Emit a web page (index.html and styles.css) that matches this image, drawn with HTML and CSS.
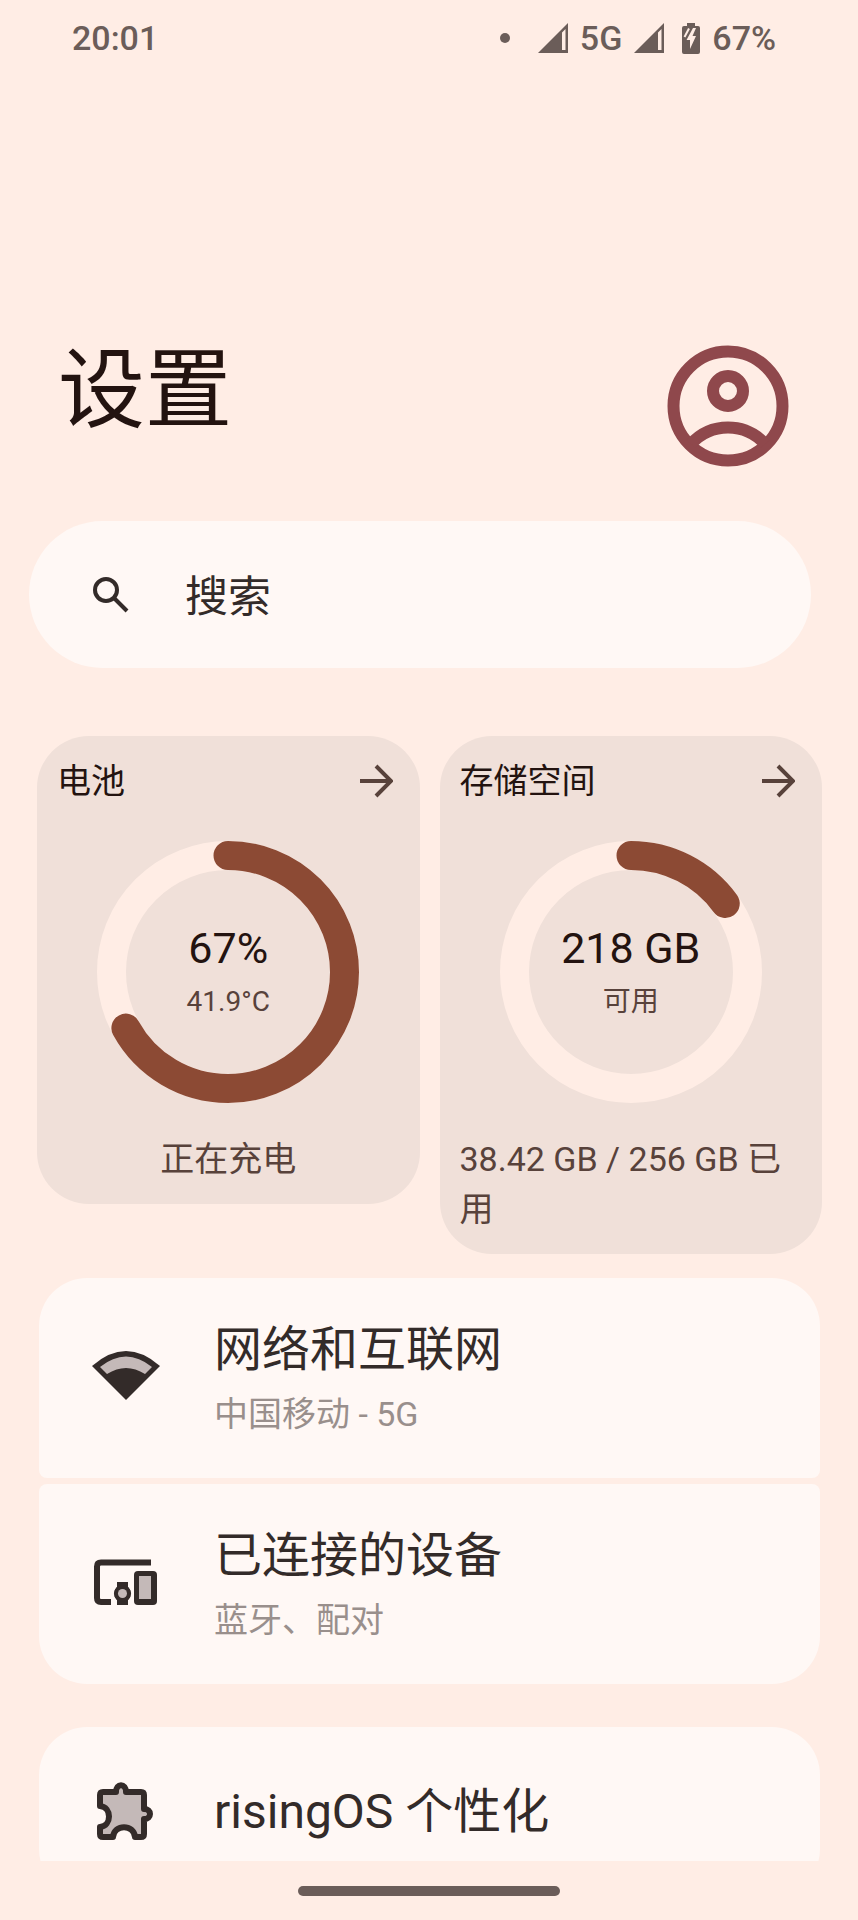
FILE: index.html
```html
<!DOCTYPE html>
<html lang="zh-CN">
  <head>
    <meta charset="UTF-8" />
    <meta name="viewport" content="width=device-width, initial-scale=1.0" />
    <title>设置</title>
    <link rel="stylesheet" href="styles.css">
  </head>
  <body>
    <div class="status-bar">
      <span>20:01</span>
      <div class="status-icons">
        <span class="dot"></span>
        <svg class="signal" viewBox="0 0 30 30" aria-hidden="true">
          <path fill-rule="evenodd" d="M30 0V30H0ZM24 9.500V27H27.500V6Z" />
        </svg>
        <span>5G</span>
        <svg class="signal" viewBox="0 0 30 30" aria-hidden="true">
          <path fill-rule="evenodd" d="M30 0V30H0ZM24 9.500V27H27.500V6Z" />
        </svg>
        <svg class="battery" viewBox="0 0 18 31" aria-hidden="true">
          <path d="M5 0H13V3H16Q18 3 18 5V29Q18 31 16 31H2Q0 31 0 29V5Q0 3 2 3H5Z" />
          <path class="bolt" d="M11 5L4.500 17H8V26L14 13H10.500L14 5Z" />
          <path class="bolt-edge" d="M2.500 14L7 5.500" />
        </svg>
        <span>67%</span>
      </div>
    </div>

    <main class="content">
      <header class="header">
        <h1>设置</h1>
        <button class="avatar" aria-label="账号">
          <svg viewBox="0 0 122 122">
            <circle cx="61" cy="61" r="54.500" />
            <circle cx="61" cy="46" r="15" />
            <path d="M24 99C44 77 78 77 98 99" />
          </svg>
        </button>
      </header>

      <label class="search">
        <svg viewBox="0 0 36 36" aria-hidden="true">
          <circle cx="13" cy="13" r="11" />
          <path d="M21 21L34 34" />
        </svg>
        <input type="text" placeholder="搜索" aria-label="搜索">
      </label>

      <section class="cards">
        <a class="card" href="#battery">
          <div class="card-head">
            <h2>电池</h2>
            <svg class="arrow" viewBox="0 0 34 34" aria-hidden="true">
              <path d="M1 17H31M17 2L32 17L17 32" />
            </svg>
          </div>
          <div class="gauge">
            <svg viewBox="0 0 262 262" aria-hidden="true">
              <circle class="track" cx="131" cy="131" r="116.500" />
              <circle class="value" cx="131" cy="131" r="116.500" pathLength="100" stroke-dasharray="67 100" />
            </svg>
            <div class="gauge-text">
              <strong>67%</strong>
              <span>41.9°C</span>
            </div>
          </div>
          <p class="center">正在充电</p>
        </a>

        <a class="card" href="#storage">
          <div class="card-head">
            <h2>存储空间</h2>
            <svg class="arrow" viewBox="0 0 34 34" aria-hidden="true">
              <path d="M1 17H31M17 2L32 17L17 32" />
            </svg>
          </div>
          <div class="gauge">
            <svg viewBox="0 0 262 262" aria-hidden="true">
              <circle class="track" cx="131" cy="131" r="116.500" />
              <circle class="value" cx="131" cy="131" r="116.500" pathLength="100" stroke-dasharray="15 100" />
            </svg>
            <div class="gauge-text">
              <strong>218 GB</strong>
              <span>可用</span>
            </div>
          </div>
          <p>38.42 GB / 256 GB 已用</p>
        </a>
      </section>

      <nav class="groups">
        <div class="group">
          <a class="row" href="#network">
            <svg viewBox="0 0 68 68" aria-hidden="true">
              <path class="dark" d="M0 24Q34 -6 68 24L34 58Z" />
              <path class="light" d="M8 25Q34 4 60 25L53 32Q34 20 15 32Z" />
            </svg>
            <div>
              <h3>网络和互联网</h3>
              <p>中国移动 - 5G</p>
            </div>
          </a>
          <a class="row" href="#devices">
            <svg viewBox="0 0 68 68" aria-hidden="true">
              <path class="line" d="M59 14.500H9Q5 14.500 5 18.500V50Q5 54 9 54H19" />
              <rect class="dark" x="42" y="23" width="23" height="34" rx="4" />
              <rect class="light" x="47" y="28" width="12" height="23" />
              <path class="dark" d="M25 34H36V39Q42 45 36 52V57H25V52Q19 45 25 39Z" />
              <circle class="dark" cx="30.500" cy="45.500" r="8.500" />
              <circle class="light" cx="30.500" cy="45.500" r="4.500" />
            </svg>
            <div>
              <h3>已连接的设备</h3>
              <p>蓝牙、配对</p>
            </div>
          </a>
        </div>
        <div class="group">
          <a class="row" href="#personalization">
            <svg viewBox="0 0 68 68" aria-hidden="true">
              <path class="piece" d="M11 16Q8 16 8 19V30C20 31 20 50 8 51V58Q8 61 11 61H21C22 48 42 48 43 61H49Q52 61 52 58V43C60 43 60 33 52 33V19Q52 16 49 16H34C34 7 24 7 24 16Z" />
              <path class="slit" d="M29 14V21M54 38H47" />
            </svg>
            <div>
              <h3>risingOS 个性化</h3>
            </div>
          </a>
        </div>
      </nav>
    </main>

    <div class="nav-bar">
      <span class="handle"></span>
    </div>
  </body>
</html>
```
FILE: styles.css
```css
* {
  box-sizing: border-box;
}
body {
  display: flex;
  flex-direction: column;
  height: 100vh;
  margin: 0;
  background-color: #ffede5;
  color: #231310;
  font-family: Roboto, "Noto Sans CJK SC", sans-serif;
}
h1,
h2,
h3,
p {
  margin: 0;
  font-weight: 400;
}
a {
  color: inherit;
  text-decoration: none;
}
svg {
  display: block;
  flex: none;
}

/* Status bar */
.status-bar {
  display: flex;
  flex: none;
  justify-content: space-between;
  align-items: center;
  height: 76px;
  padding: 0 82px 0 72px;
  color: #6b5d59;
  font-size: 34px;
  font-weight: 500;
}
.status-icons {
  display: flex;
  align-items: center;
  gap: 12px;
}
.dot {
  width: 10px;
  height: 10px;
  margin-right: 16px;
  border-radius: 50%;
  background-color: #6b5d59;
}
.signal {
  width: 30px;
  height: 30px;
  fill: #6b5d59;
}
.battery {
  width: 18px;
  height: 31px;
  margin-left: 6px;
  fill: #6b5d59;
}
.bolt {
  fill: #ffede5;
}
.bolt-edge {
  stroke: #ffede5;
  stroke-width: 2;
}

.content {
  flex: 1;
  min-height: 0;
  overflow: hidden;
}
.header {
  display: flex;
  justify-content: space-between;
  align-items: flex-start;
  padding: 252px 69px 0 58px;
}
.header h1 {
  font-size: 87px;
  line-height: 126px;
}
.avatar {
  width: 122px;
  height: 122px;
  margin-top: 17px;
  padding: 0;
  border: none;
  background: none;
  cursor: pointer;
}
.avatar svg {
  width: 122px;
  height: 122px;
  fill: none;
  stroke: #8f484c;
  stroke-width: 12;
}

/* Search */
.search {
  display: flex;
  align-items: center;
  gap: 56px;
  height: 147px;
  margin: 54px 47px 68px 29px;
  padding: 0 64px;
  border-radius: 74px;
  background-color: #fff8f5;
}
.search svg {
  width: 36px;
  height: 36px;
  fill: none;
  stroke: #332b29;
  stroke-width: 4;
}
.search input {
  flex: 1;
  min-width: 0;
  padding: 4px 0 0;
  border: none;
  outline: none;
  background: none;
  color: #332b29;
  font: inherit;
  font-size: 43px;
}
.search input::placeholder {
  color: #332b29;
  opacity: 1;
}

/* Battery and storage cards */
.cards {
  display: grid;
  grid-template-columns: 1fr 1fr;
  gap: 20px;
  align-items: start;
  margin: 0 36px 0 37px;
}
.card {
  padding: 20px;
  border-radius: 52px;
  background-color: #f0e0d9;
}
.card-head {
  display: flex;
  justify-content: space-between;
  align-items: center;
  padding-right: 7px;
}
.card-head h2 {
  font-size: 34px;
  line-height: 50px;
}
.arrow {
  width: 34px;
  height: 34px;
  fill: none;
  stroke: #58423b;
  stroke-width: 4;
}
.gauge {
  display: grid;
  place-items: center;
  margin: 35px 0 31px;
}
.gauge > * {
  grid-area: 1 / 1;
}
.gauge svg {
  width: 262px;
  height: 262px;
  fill: none;
  stroke-width: 29;
  transform: rotate(-90deg);
}
.track {
  stroke: #ffede5;
}
.value {
  stroke: #8c4a34;
  stroke-linecap: round;
}
.gauge-text {
  display: flex;
  flex-direction: column;
  align-items: center;
}
.gauge-text strong {
  font-size: 43px;
  font-weight: 400;
  line-height: 60px;
}
.gauge-text span {
  color: #58423b;
  font-size: 28px;
  line-height: 48px;
}
.card p {
  color: #58423b;
  font-size: 34px;
  line-height: 50px;
}
.card .center {
  text-align: center;
}

/* Settings list */
.groups {
  display: flex;
  flex-direction: column;
  gap: 43px;
  margin: 24px 38px 0 39px;
}
.group {
  display: flex;
  flex-direction: column;
  gap: 6px;
  overflow: hidden;
  flex: none;
  border-radius: 48px;
}
.row {
  display: flex;
  align-items: center;
  gap: 54px;
  min-height: 170px;
  padding: 40px 53px;
  border-radius: 8px;
  background-color: #fff8f5;
  color: #332b29;
}
.row svg {
  width: 68px;
  height: 68px;
  margin-bottom: 4px;
}
.row h3 {
  font-size: 48px;
  line-height: 64px;
}
.row p {
  margin-top: 8px;
  color: #998f8c;
  font-size: 34px;
  line-height: 48px;
}
.dark {
  fill: #332b29;
}
.light {
  fill: #c4b9b8;
}
.line {
  fill: none;
  stroke: #332b29;
  stroke-width: 6;
}
.piece {
  fill: #c4b9b8;
  stroke: #332b29;
  stroke-width: 6;
  stroke-linejoin: round;
}
.slit {
  stroke: #c4b9b8;
  stroke-width: 3;
}

/* Gesture navigation */
.nav-bar {
  display: flex;
  flex: none;
  justify-content: center;
  align-items: center;
  height: 59px;
}
.handle {
  width: 262px;
  height: 10px;
  border-radius: 5px;
  background-color: #6b5d59;
}
```
